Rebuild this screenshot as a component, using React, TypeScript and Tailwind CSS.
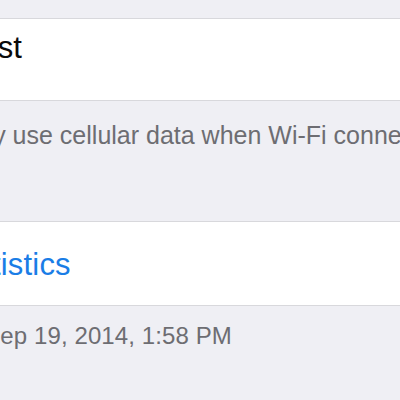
import React from "react";

export default function App() {
  return (
    <div
      className="w-[400px] h-[400px] overflow-hidden bg-[#efeff4]"
      style={{ fontFamily: '"Liberation Sans", Arial, sans-serif' }}
    >
      <div className="h-[18px]" />
      <div className="h-[83px] bg-white border-y border-[#d8d8dc] pt-[13px] whitespace-nowrap">
        <div className="ml-[-140px] text-[31px] leading-none text-[#0a0a0a]">Wi-Fi Assist</div>
      </div>
      <div className="h-[120px] pt-[22px] whitespace-nowrap">
        <div className="ml-[-143px] text-[25px] leading-none text-[#6d6d72]">
          Automatically use cellular data when Wi-Fi connectivity is poor.
        </div>
      </div>
      <div className="h-[85px] bg-white border-y border-[#d8d8dc] pt-[27px] whitespace-nowrap">
        <div className="ml-[-146px] text-[31px] tracking-[0.2px] leading-none text-[#1a7de6]">Reset Statistics</div>
      </div>
      <div className="pt-[18px] whitespace-nowrap">
        <div className="ml-[-145px] text-[24px] tracking-[0.1px] leading-none text-[#6d6d72]">
          Last Reset: Sep 19, 2014, 1:58 PM
        </div>
      </div>
    </div>
  );
}
